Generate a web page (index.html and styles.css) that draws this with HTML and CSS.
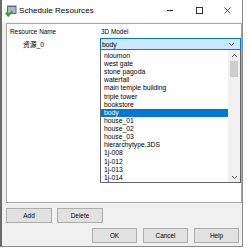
FILE: index.html
```html
<!DOCTYPE html>
<html>
<head>
<meta charset="utf-8">
<link rel="stylesheet" href="styles.css">
</head>
<body>
<div class="window">
  <div class="titlebar">
    <svg class="appicon" width="12" height="12" viewBox="0 0 12 12">
      <rect x="2" y="0.5" width="9.5" height="8.5" fill="#5f6d7a"/>
      <rect x="3" y="2" width="7.5" height="6" fill="#a8b7c5"/>
      <path d="M0.8 7.6 L3.2 10.6 L7.4 6.2" stroke="#37a23a" stroke-width="2" fill="none"/>
    </svg>
    <span class="title">Schedule Resources</span>
    <div class="controls">
      <svg class="ctl" width="28" height="12" viewBox="0 0 28 12"><path d="M9 6.5 H15" stroke="#333" stroke-width="1"/></svg>
      <svg class="ctl" width="28" height="12" viewBox="0 0 28 12"><rect x="10.5" y="3.5" width="6" height="6" stroke="#333" fill="none"/></svg>
      <svg class="ctl" width="28" height="12" viewBox="0 0 28 12"><path d="M10.5 3.5 L16.5 9.5 M16.5 3.5 L10.5 9.5" stroke="#333" stroke-width="0.9"/></svg>
    </div>
  </div>
  <div class="client">
    <div class="grid">
      <div class="hdr">
        <span class="c1">Resource Name</span>
        <span class="c2">3D Model</span>
      </div>
      <div class="row">
        <span class="c1 name">资源_0</span>
        <div class="combo">
          <span>body</span>
          <svg width="7" height="5" viewBox="0 0 7 5"><path d="M1 1 L3.5 3.5 L6 1" stroke="#555" fill="none"/></svg>
        </div>
      </div>
      <div class="dropdown">
        <ul class="items">
          <li>nioumon</li>
          <li>west gate</li>
          <li>stone pagoda</li>
          <li>waterfall</li>
          <li>main temple building</li>
          <li>triple tower</li>
          <li>bookstore</li>
          <li class="sel">body</li>
          <li>house_01</li>
          <li>house_02</li>
          <li>house_03</li>
          <li>hierarchytype.3DS</li>
          <li>1j-008</li>
          <li>1j-012</li>
          <li>1j-013</li>
          <li>1j-014</li>
        </ul>
        <div class="scrollbar">
          <div class="sbtn"><svg width="7" height="5" viewBox="0 0 7 5"><path d="M1 4 L3.5 1.5 L6 4" stroke="#555" fill="none"/></svg></div>
          <div class="thumb"></div>
          <div class="track"></div>
          <div class="sbtn"><svg width="7" height="5" viewBox="0 0 7 5"><path d="M1 1 L3.5 3.5 L6 1" stroke="#555" fill="none"/></svg></div>
        </div>
      </div>
    </div>
    <div class="btnrow">
      <button class="btn">Add</button>
      <button class="btn">Delete</button>
    </div>
    <div class="btnrow right">
      <button class="btn">OK</button>
      <button class="btn">Cancel</button>
      <button class="btn">Help</button>
    </div>
  </div>
</div>
</body>
</html>
```
FILE: styles.css
```css
* { box-sizing: border-box; }
html, body { margin: 0; padding: 0; background: #ffffff; }
body { font-family: "Liberation Sans", Arial, sans-serif; color: #000; }

.window {
  width: 243px;
  height: 247px;
  border-left: 2px solid #6a6a6a;
  border-right: 1px solid #8a8a8a;
  border-bottom: 1px solid #8a8a8a;
  display: flex;
  flex-direction: column;
  background: #f0f0f0;
}

.titlebar {
  height: 22px;
  background: #ffffff;
  display: flex;
  align-items: center;
  padding-left: 3px;
}
.appicon { margin-top: -1px; }
.title { font-size: 8px; margin-left: 2px; margin-top: -1px; letter-spacing: 0.05px; }
.controls { margin-left: auto; display: flex; margin-top: -2px; margin-right: 0; }
.ctl { display: block; }

.client {
  flex: 1;
  padding: 1px 0 3px 4px;
  display: flex;
  flex-direction: column;
}

.grid {
  position: relative;
  width: 236px;
  height: 180px;
  background: #ffffff;
  border: 1px solid #a9a9a9;
}

.hdr, .row { display: flex; font-size: 6.4px; }
.hdr { height: 14px; align-items: center; }
.row { height: 12px; align-items: center; }
.c1 { width: 93px; padding-left: 3px; }
.c2 { padding-left: 1px; }
.name { padding-left: 16px; font-family: "Liberation Sans", "Noto Sans CJK SC", sans-serif; font-size: 6.8px; }

.combo {
  width: 141px;
  height: 12px;
  background: #cce8ff;
  border: 1px solid #0078d7;
  display: flex;
  align-items: center;
  justify-content: space-between;
  padding: 0 5px 0 1px;
  font-size: 6.8px;
}
.combo svg { display: block; }

.dropdown {
  position: absolute;
  left: 93px;
  top: 25px;
  width: 141px;
  height: 134px;
  background: #ffffff;
  border: 1px solid #646464;
  display: flex;
}
.items {
  list-style: none;
  margin: 0;
  padding: 1.8px 0 0 0;
  flex: 1;
  font-size: 6.8px;
}
.items li {
  height: 8.15px;
  line-height: 8.15px;
  padding-left: 3px;
  white-space: nowrap;
}
.items li.sel { background: #0078d7; color: #ffffff; }

.scrollbar {
  width: 12px;
  background: #f0f0f0;
  display: flex;
  flex-direction: column;
}
.sbtn {
  height: 10px;
  display: flex;
  align-items: center;
  justify-content: center;
}
.thumb {
  height: 16px;
  margin: 1px 2px 0 2px;
  background: #cdcdcd;
}
.track { flex: 1; }

.btnrow { display: flex; gap: 5px; margin-top: 5px; }
.btnrow.right { justify-content: flex-end; gap: 6px; padding-right: 3px; }
.btn {
  width: 46px;
  height: 15px;
  margin: 0;
  padding: 0;
  background: #e1e1e1;
  border: 1px solid #adadad;
  font-family: "Liberation Sans", Arial, sans-serif;
  font-size: 6.4px;
  color: #000;
}
.btnrow.right .btn { width: 45px; }
```
